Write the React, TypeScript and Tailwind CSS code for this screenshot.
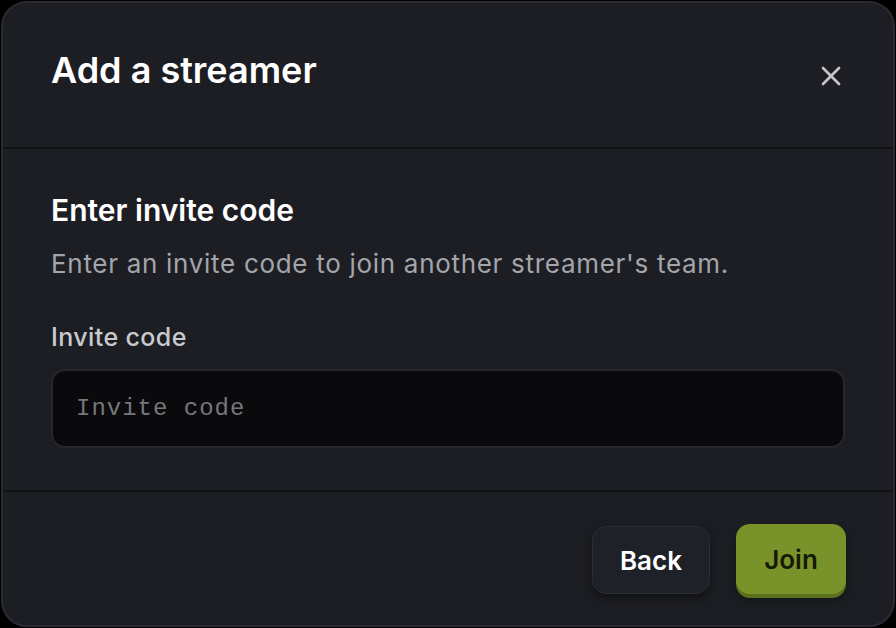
import { X } from "lucide-react";

const sans = "font-['Inter','Noto_Sans',sans-serif]";

export default function App() {
	return (
		<div className={`h-[628px] w-[896px] bg-black p-px ${sans}`}>
			<div className="flex h-full flex-col overflow-hidden rounded-[26px] border-2 border-[#2a2b31] bg-[#1d1e23]">
				{/* header */}
				<div className="flex h-[146px] shrink-0 items-start justify-between border-b-2 border-[#111215] pl-[48px] pr-[46px] pt-[44px]">
					<h2 className="text-[36px] font-semibold leading-[46px] text-white">
						Add a streamer
					</h2>
					<button className="mt-[13px] flex h-8 w-8 items-center justify-center text-[#c4c5c9]">
						<X className="h-[34px] w-[34px]" strokeWidth={2} />
					</button>
				</div>

				{/* body */}
				<div className="flex flex-col px-[48px] pb-[42px] pt-[44px]">
					<h3 className="text-[30px] font-semibold leading-[34px] text-white">
						Enter invite code
					</h3>
					<p className="mt-[22px] text-[26px] leading-[30px] tracking-[0.7px] text-[#a4a5ab]">
						Enter an invite code to join another streamer's team.
					</p>
					<label className="mt-[43px] text-[25px] font-medium leading-[30px] tracking-[0.4px] text-[#c9cace]">
						Invite code
					</label>
					<input
						placeholder="Invite code"
						className="mt-[17px] h-[79px] w-full rounded-[14px] border-2 border-[#26272c] bg-[#0a0a0c] px-[23px] font-['Liberation_Mono',monospace] text-[24px] tracking-[1px] text-white outline-none placeholder:text-[#76777b]"
					/>
				</div>

				{/* footer */}
				<div className="flex flex-1 items-start justify-end gap-[26px] border-t-2 border-[#111215] pr-[47px] pt-[32px]">
					<button className="mt-[2px] h-[68px] w-[118px] rounded-[14px] border border-[#2c2e35] bg-[#1f2128] text-[26px] font-semibold text-white shadow-[0_4px_10px_rgba(0,0,0,0.45)]">
						Back
					</button>
					<button className="h-[70px] w-[110px] rounded-[14px] bg-[#7a922a] text-[26px] font-semibold text-[#151a06] shadow-[0_4px_0_#5b701c,0_6px_10px_rgba(0,0,0,0.4)]">
						Join
					</button>
				</div>
			</div>
		</div>
	);
}
